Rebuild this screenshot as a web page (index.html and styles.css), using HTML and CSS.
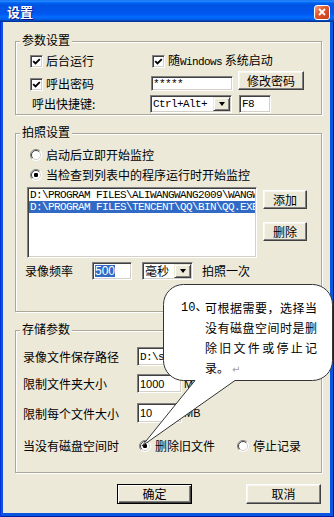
FILE: index.html
```html
<!DOCTYPE html>
<html lang="zh-CN">
<head>
<meta charset="utf-8">
<title>设置</title>
<link rel="stylesheet" href="styles.css">
</head>
<body>
<svg class="defs" aria-hidden="true">
  <defs>
    <symbol id="radio" viewBox="0 0 12 12">
      <circle cx="6" cy="6" r="5.5" fill="#fff"/>
      <path d="M2.1 9.9A5.5 5.5 0 0 1 9.9 2.1" fill="none" stroke="#808080"/>
      <path d="M2.8 9.2A4.5 4.5 0 0 1 9.2 2.8" fill="none" stroke="#404040"/>
      <path d="M9.9 2.1A5.5 5.5 0 0 1 2.1 9.9" fill="none" stroke="#fff"/>
      <path d="M9.2 2.8A4.5 4.5 0 0 1 2.8 9.2" fill="none" stroke="#D4D0C8"/>
    </symbol>
    <symbol id="check" viewBox="0 0 9 9">
      <path d="M1.2 4.2L3.5 6.5L7.8 2.2" fill="none" stroke="#000" stroke-width="1.9"/>
    </symbol>
  </defs>
</svg>
<div class="window">
  <div class="titlebar">
    <span class="title">设置</span>
    <span class="close"><svg width="8" height="8" viewBox="0 0 8 8"><path d="M1 1L7 7M7 1L1 7" stroke="#fff" stroke-width="1.8"/></svg></span>
  </div>
  <div class="client">
    <section class="group g1">
      <div class="legend">参数设置</div>
      <div class="row r1">
        <label class="cell-a chk"><span class="cb"><svg width="9" height="9"><use href="#check"/></svg></span><span>后台运行</span></label>
        <label class="chk"><span class="cb"><svg width="9" height="9"><use href="#check"/></svg></span><span>随<span class="mono">Windows</span> 系统启动</span></label>
      </div>
      <div class="row r2">
        <label class="cell-a chk"><span class="cb"><svg width="9" height="9"><use href="#check"/></svg></span><span>呼出密码</span></label>
        <span class="field pw mono">*****</span>
        <span class="btn btn-pw">修改密码</span>
      </div>
      <div class="row r3">
        <span class="cell-a hk-label">呼出快捷键:</span>
        <span class="combo hk"><span class="combo-text mono">Ctrl+Alt+</span><span class="drop"><i class="tri"></i></span></span>
        <span class="field f8 mono">F8</span>
      </div>
    </section>

    <section class="group g2">
      <div class="legend">拍照设置</div>
      <label class="row opt o1"><svg class="radio" width="12" height="12"><use href="#radio"/></svg><span>启动后立即开始监控</span></label>
      <label class="row opt o2"><svg class="radio" width="12" height="12" viewBox="0 0 12 12"><use href="#radio"/><rect x="4" y="4" width="4" height="4" rx="1.2" fill="#000"/></svg><span>当检查到列表中的程序运行时开始监控</span></label>
      <div class="row list-row">
        <div class="listbox">
          <div class="item">D:\PROGRAM FILES\ALIWANGWANG2009\WANGWA</div>
          <div class="item sel">D:\PROGRAM FILES\TENCENT\QQ\BIN\QQ.EXE</div>
        </div>
        <div class="list-btns">
          <span class="btn btn-add">添加</span>
          <span class="btn btn-del">删除</span>
        </div>
      </div>
      <div class="row freq-row">
        <span class="freq-label">录像频率</span>
        <span class="field freq"><span class="seltext">500</span></span>
        <span class="combo unit"><span class="combo-text">毫秒</span><span class="drop"><i class="tri"></i></span></span>
        <span class="freq-tail">拍照一次</span>
      </div>
    </section>

    <section class="group g3">
      <div class="legend">存储参数</div>
      <div class="row s1"><span class="s-label">录像文件保存路径</span><span class="field path mono">D:\screen</span></div>
      <div class="row s2"><span class="s-label">限制文件夹大小</span><span class="field size">1000</span><span class="unit-mb">MB</span></div>
      <div class="row s3"><span class="s-label">限制每个文件大小</span><span class="field size">10</span><span class="unit-mb">MB</span></div>
      <div class="row s4">
        <span class="s-label2">当没有磁盘空间时</span>
        <label class="opt2"><svg class="radio" width="12" height="12" viewBox="0 0 12 12"><use href="#radio"/><rect x="4" y="4" width="4" height="4" rx="1.2" fill="#000"/></svg><span>删除旧文件</span></label>
        <label class="opt2 stop"><svg class="radio" width="12" height="12"><use href="#radio"/></svg><span>停止记录</span></label>
      </div>
    </section>

    <div class="actions">
      <span class="btn default">确定</span>
      <span class="btn">取消</span>
    </div>
  </div>

  <div class="callout">
    <svg class="bubble" width="334" height="517" viewBox="0 0 334 517">
      <path d="M183.5 284.5H312.5A20 20 0 0 1 332.5 304.5V360.5A20 20 0 0 1 312.5 380.5H235L142 446L195 380.5H183.5A20 20 0 0 1 163.5 360.5V304.5A20 20 0 0 1 183.5 284.5Z" fill="#fff" stroke="#333" stroke-width="1"/>
    </svg>
    <div class="callout-text">
      <div class="cl-line first"><span class="num">10、</span><span class="jt">可根据需要，选择当</span></div>
      <div class="cl-line jt">没有磁盘空间时是删</div>
      <div class="cl-line jt">除旧文件或停止记</div>
      <div class="cl-line">录。<span class="para">↵</span></div>
    </div>
  </div>
</div>
</body>
</html>
```

FILE: styles.css
```css
* { box-sizing: border-box; margin: 0; padding: 0; }
html, body { width: 334px; height: 517px; overflow: hidden; background: #ECE9D8; }
body {
  font-family: "Noto Sans CJK SC", "Noto Sans", sans-serif;
  font-size: 12px;
  line-height: 14px;
  color: #000;
}
.defs { position: absolute; width: 0; height: 0; overflow: hidden; }

.window {
  position: relative;
  width: 334px;
  height: 517px;
  display: flex;
  flex-direction: column;
  background: #0A55E0;
  box-shadow: inset 1px 0 #0831D9, inset -1px 0 #001EA0, inset 0 -1px #001EA0;
}
.titlebar {
  flex: none;
  height: 22px;
  display: flex;
  align-items: center;
  justify-content: space-between;
  padding: 0 4px 0 7px;
  background: linear-gradient(to bottom, #0058EE 0%, #3593FF 4%, #288EFF 6%, #127DFF 8%, #036FFC 10%, #0262EE 14%, #0057E5 20%, #0054E3 24%, #0055EB 56%, #005BF5 66%, #026AFE 76%, #0062EF 86%, #0052D6 92%, #0040AB 94%, #003092 100%);
}
.title {
  color: #fff;
  font-weight: 700;
  font-size: 13px;
  line-height: 16px;
  margin-top: 2px;
  text-shadow: 1px 1px 0 #0A1882;
}
.close {
  width: 16px;
  height: 15px;
  margin-top: 2px;
  border: 1px solid #fff;
  border-radius: 3px;
  background: linear-gradient(135deg, #F2A58A 0%, #E2582D 40%, #C33C18 100%);
  display: flex;
  align-items: center;
  justify-content: center;
}

.client {
  flex: 1;
  min-height: 0;
  margin: 0 4px 4px 3px;
  background: #ECE9D8;
  display: flex;
  flex-direction: column;
}

.group {
  flex: none;
  margin: 0 8px 0 12px;
  border: 1px solid #ACA899;
  box-shadow: inset 1px 1px #fff, 1px 1px #fff;
  display: flex;
  flex-direction: column;
  align-items: flex-start;
}
.legend {
  margin: -9px 0 0 4px;
  padding: 0 2px;
  height: 14px;
  line-height: 14px;
  background: #ECE9D8;
}
.row { display: flex; align-items: center; flex: none; }
.mono { font-family: "Liberation Mono", "Noto Sans CJK SC", monospace; font-size: 11px; letter-spacing: -0.6px; }

/* controls */
.cb {
  width: 13px;
  height: 13px;
  flex: none;
  display: flex;
  align-items: center;
  justify-content: center;
  background: #fff;
  border: 1px solid;
  border-color: #808080 #fff #fff #808080;
  box-shadow: inset 1px 1px #404040, inset -1px -1px #D4D0C8;
}
.chk { display: flex; align-items: center; gap: 3px; }
.radio { width: 12px; height: 12px; flex: none; display: block; }
.field {
  flex: none;
  display: flex;
  align-items: center;
  background: #fff;
  border: 1px solid;
  border-color: #808080 #fff #fff #808080;
  box-shadow: inset 1px 1px #404040, inset -1px -1px #D4D0C8;
  padding: 0 2px;
  white-space: nowrap;
  overflow: hidden;
}
.combo {
  flex: none;
  display: flex;
  align-items: center;
  background: #fff;
  border: 1px solid;
  border-color: #808080 #fff #fff #808080;
  box-shadow: inset 1px 1px #404040, inset -1px -1px #D4D0C8;
  padding: 1px 1px 1px 2px;
}
.combo-text { flex: 1; white-space: nowrap; }
.drop {
  flex: none;
  width: 17px;
  height: 14px;
  display: flex;
  align-items: center;
  justify-content: center;
  background: #ECE9D8;
  border: 1px solid;
  border-color: #ECE9D8 #404040 #404040 #ECE9D8;
  box-shadow: inset 1px 1px #fff, inset -1px -1px #808080;
}
.tri {
  display: block;
  width: 0;
  height: 0;
  border-left: 3.5px solid transparent;
  border-right: 3.5px solid transparent;
  border-top: 4px solid #000;
}
.btn {
  flex: none;
  display: flex;
  align-items: center;
  justify-content: center;
  background: #ECE9D8;
  border: 1px solid;
  border-color: #fff #404040 #404040 #fff;
  box-shadow: inset -1px -1px #808080, inset 1px 1px #F7F6F1;
}
.btn.default {
  border-color: #000;
  box-shadow: inset 1px 1px #fff, inset -1px -1px #404040, inset -2px -2px #808080;
}

/* group 1 */
.g1 { margin-top: 19px; height: 74px; }
.g1 .row { margin-left: 14px; }
.r1 { margin-top: 6px; height: 16px; }
.r1 .cell-a { width: 122px; }
.r2 { margin-top: 2px; height: 20px; align-items: flex-start; }
.r2 .cell-a { width: 121px; margin-top: 6px; }
.r3 { margin-top: 4px; height: 18px; }
.cell-a { width: 120px; flex: none; }
.pw { margin-top: 5px; width: 82px; height: 15px; padding-left: 1px; }
.btn-pw { margin-left: 5px; width: 66px; height: 19px; }
.hk-label { padding-left: 2px; line-height: 18px; }
.hk { width: 82px; height: 18px; }
.f8 { margin-left: 7px; width: 32px; height: 18px; }

/* group 2 */
.g2 { margin-top: 18px; height: 179px; }
.opt { margin-left: 14px; height: 14px; gap: 4px; }
.o1 { margin-top: 9px; }
.o2 { margin-top: 6px; }
.list-row { margin: 5px 0 0 11px; height: 71px; align-items: flex-start; }
.listbox {
  width: 230px;
  height: 71px;
  background: #fff;
  border: 1px solid;
  border-color: #808080 #fff #fff #808080;
  box-shadow: inset 1px 1px #404040, inset -1px -1px #D4D0C8;
  padding: 1px 1px 0 1px;
  overflow: hidden;
}
.item {
  font-family: "Liberation Mono", monospace;
  font-size: 11px;
  letter-spacing: -0.6px;
  line-height: 12px;
  height: 12px;
  padding-left: 1px;
  white-space: nowrap;
  overflow: hidden;
}
.item.sel { background: #316AC5; color: #fff; }
.list-btns { margin-left: 6px; display: flex; flex-direction: column; }
.list-btns .btn { width: 44px; height: 19px; }
.btn-add { margin-top: 3px; }
.btn-del { margin-top: 13px; }
.freq-row { margin: 4px 0 0 9px; height: 18px; }
.freq-label { width: 67px; }
.freq { width: 40px; height: 18px; padding-left: 2px; }
.seltext {
  background: #316AC5;
  color: #fff;
  font-family: "Liberation Sans", sans-serif;
  font-size: 12px;
  line-height: 12px;
}
.unit { margin-left: 10px; width: 51px; height: 18px; }
.freq-tail { margin-left: 9px; }

/* group 3 */
.g3 { margin-top: 18px; height: 143px; }
.g3 .row { margin-left: 7px; }
.s-label { width: 114px; line-height: 19px; }
.s1 { margin-top: 11px; height: 19px; }
.s2 { margin-top: 8px; height: 19px; }
.s3 { margin-top: 10px; height: 20px; }
.s4 { margin-top: 16px; height: 14px; }
.path { width: 163px; height: 19px; padding-left: 2px; }
.size { width: 45px; height: 100%; padding-left: 2px; font-family: "Liberation Sans", sans-serif; font-size: 11px; }
.unit-mb { margin-left: 2px; font-family: "Liberation Sans", sans-serif; font-size: 11px; }
.s-label2 { width: 116px; }
.opt2 { display: flex; align-items: center; gap: 4px; }
.stop { margin-left: 22px; }

.actions { display: flex; gap: 54px; margin: 11px 0 0 114px; }
.actions .btn { width: 75px; height: 20px; }

/* callout overlay */
.callout { position: absolute; left: 0; top: 0; width: 334px; height: 517px; pointer-events: none; }
.bubble { position: absolute; left: 0; top: 0; }
.callout-text {
  position: absolute;
  left: 181px;
  top: 298px;
  width: 136px;
  padding-left: 24px;
  line-height: 20px;
}
.cl-line { height: 20px; white-space: nowrap; }
.cl-line.jt, .first .jt { text-align: justify; text-align-last: justify; }
.first { display: flex; margin-left: -24px; }
.first .jt { flex: 1; }
.num { width: 24px; flex: none; font-family: "Liberation Mono", "Noto Sans CJK SC", monospace; }
.para { color: #A0A0A0; font-family: "DejaVu Sans", sans-serif; font-size: 10px; margin-left: 3px; }
```
